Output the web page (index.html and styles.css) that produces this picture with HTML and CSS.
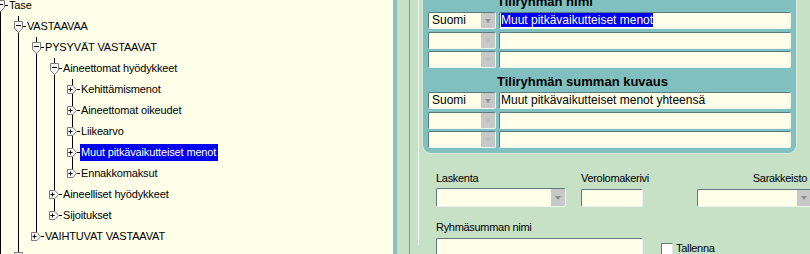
FILE: index.html
```html
<!DOCTYPE html>
<html lang="fi">
<head>
<meta charset="utf-8">
<title>Tiliryhmät</title>
<link rel="stylesheet" href="styles.css">
</head>
<body>
<svg class="defs" width="0" height="0" aria-hidden="true">
  <symbol id="i-minus" viewBox="0 0 9 12">
    <path d="M0.5 0.5H8.5V7.5L4.5 11.5L0.5 7.5Z" fill="#f4f4f4" stroke="#7b7b7b"/>
    <path d="M2 4.5H7" stroke="#000"/>
  </symbol>
  <symbol id="i-plus" viewBox="0 0 10 9">
    <path d="M0.5 0.5H6L9.5 4.5L6 8.5H0.5Z" fill="#f4f4f4" stroke="#7b7b7b"/>
    <path d="M1.5 4.5H5.5M3.5 2.5V6.5" stroke="#000"/>
  </symbol>
</svg>
<div class="app">
  <div class="tree-pane">
    <ul class="tree">
      <li class="more">
        <div class="node"><svg class="ico minus"><use href="#i-minus"/></svg><span class="dash"></span><span class="label">Tase</span></div>
        <ul>
          <li class="more">
            <div class="node"><svg class="ico minus"><use href="#i-minus"/></svg><span class="dash"></span><span class="label">VASTAAVAA</span></div>
            <ul>
              <li class="more">
                <div class="node"><svg class="ico minus"><use href="#i-minus"/></svg><span class="dash"></span><span class="label">PYSYVÄT VASTAAVAT</span></div>
                <ul>
                  <li class="more">
                    <div class="node"><svg class="ico minus"><use href="#i-minus"/></svg><span class="dash"></span><span class="label">Aineettomat hyödykkeet</span></div>
                    <ul>
                      <li class="more"><div class="node"><svg class="ico plus"><use href="#i-plus"/></svg><span class="dash"></span><span class="label">Kehittämismenot</span></div></li>
                      <li class="more"><div class="node"><svg class="ico plus"><use href="#i-plus"/></svg><span class="dash"></span><span class="label">Aineettomat oikeudet</span></div></li>
                      <li class="more"><div class="node"><svg class="ico plus"><use href="#i-plus"/></svg><span class="dash"></span><span class="label">Liikearvo</span></div></li>
                      <li class="more"><div class="node"><svg class="ico plus"><use href="#i-plus"/></svg><span class="dash"></span><span class="label sel">Muut pitkävaikutteiset menot</span></div></li>
                      <li class="last"><div class="node"><svg class="ico plus"><use href="#i-plus"/></svg><span class="dash"></span><span class="label">Ennakkomaksut</span></div></li>
                    </ul>
                  </li>
                  <li class="more"><div class="node"><svg class="ico plus"><use href="#i-plus"/></svg><span class="dash"></span><span class="label">Aineelliset hyödykkeet</span></div></li>
                  <li class="last"><div class="node"><svg class="ico plus"><use href="#i-plus"/></svg><span class="dash"></span><span class="label">Sijoitukset</span></div></li>
                </ul>
              </li>
              <li class="last"><div class="node"><svg class="ico plus"><use href="#i-plus"/></svg><span class="dash"></span><span class="label">VAIHTUVAT VASTAAVAT</span></div></li>
            </ul>
          </li>
          <li class="last"><div class="node"><svg class="ico minus"><use href="#i-minus"/></svg><span class="dash"></span></div></li>
        </ul>
      </li>
    </ul>
  </div>

  <div class="sash"></div>

  <div class="workspace">
    <div class="frame">
      <section class="panel">
        <h2 class="ph">Tiliryhmän nimi</h2>
        <div class="prow">
          <div class="combo"><span class="cv">Suomi</span><span class="cbtn"><i class="tri"></i></span></div>
          <div class="tf"><span class="hl">Muut pitkävaikutteiset menot</span></div>
        </div>
        <div class="prow">
          <div class="combo empty"><span class="cv"></span><span class="cbtn"><i class="tri"></i></span></div>
          <div class="tf"></div>
        </div>
        <div class="prow">
          <div class="combo empty"><span class="cv"></span><span class="cbtn"><i class="tri"></i></span></div>
          <div class="tf"></div>
        </div>
        <h2 class="ph">Tiliryhmän summan kuvaus</h2>
        <div class="prow">
          <div class="combo"><span class="cv">Suomi</span><span class="cbtn"><i class="tri"></i></span></div>
          <div class="tf">Muut pitkävaikutteiset menot yhteensä</div>
        </div>
        <div class="prow">
          <div class="combo empty"><span class="cv"></span><span class="cbtn"><i class="tri"></i></span></div>
          <div class="tf"></div>
        </div>
        <div class="prow">
          <div class="combo empty"><span class="cv"></span><span class="cbtn"><i class="tri"></i></span></div>
          <div class="tf"></div>
        </div>
      </section>

      <div class="fields">
        <div class="frow a">
          <div class="field lask">
            <span class="flabel">Laskenta</span>
            <div class="combo big"><span class="cv"></span><span class="cbtn"><i class="tri"></i></span></div>
          </div>
          <div class="field vero">
            <span class="flabel">Verolomakerivi</span>
            <div class="tf mid"></div>
          </div>
          <div class="field sara">
            <span class="flabel right">Sarakkeisto</span>
            <div class="combo mid"><span class="cv"></span><span class="cbtn"><i class="tri"></i></span></div>
          </div>
        </div>
        <div class="frow b">
          <div class="field ryhma">
            <span class="flabel">Ryhmäsumman nimi</span>
            <div class="tf big"></div>
          </div>
          <label class="check"><span class="box"></span><span class="clabel">Tallenna</span></label>
        </div>
      </div>
    </div>
  </div>
</div>
</body>
</html>
```

FILE: styles.css
```css
html, body {
  margin: 0;
  padding: 0;
  width: 810px;
  height: 254px;
  overflow: hidden;
  font-family: "Liberation Sans", Arial, sans-serif;
  color: #000;
}

.defs {
  position: absolute;
  width: 0;
  height: 0;
}

.app {
  display: flex;
  height: 254px;
  overflow: hidden;
}

/* ---------- tree ---------- */
.tree-pane {
  flex: none;
  width: 393px;
  height: 254px;
  background: #fffee9;
  overflow: hidden;
}

.tree,
.tree ul {
  list-style: none;
  margin: 0;
  padding: 0;
}

.tree {
  margin-top: -5px;
}

.tree ul {
  padding-left: 18px;
}

.tree li {
  background: linear-gradient(#000, #000) no-repeat 0 0 / 1px 100%;
}

.tree li.last {
  background-size: 1px 11px;
}

.node {
  display: flex;
  align-items: center;
  height: 21px;
  white-space: nowrap;
  font-size: 11px;
  letter-spacing: -0.15px;
}

.ico {
  flex: none;
  display: block;
}

.ico.minus {
  width: 9px;
  height: 12px;
  margin-left: -4px;
}

.ico.plus {
  width: 10px;
  height: 9px;
  margin-left: -5px;
}

.dash {
  flex: none;
  width: 3px;
  height: 1px;
  background: #000;
}

.label {
  padding: 1px 2px 1px 1px;
  line-height: 15px;
}

.label.sel {
  background: #0000f0;
  color: #fff;
}

/* ---------- sash / frame ---------- */
.sash {
  flex: none;
  width: 12px;
  background: #c6e1c6;
  border-left: 4px solid #88c2c2;
  border-right: 1px solid #729c9c;
}

.workspace {
  flex: 1;
  min-width: 0;
  background: #c6e1c6;
  padding-left: 8px;
  overflow: hidden;
}

.frame {
  height: 100%;
  border-left: 1px solid #eef6ee;
  padding-left: 4px;
}

/* ---------- teal panel ---------- */
.panel {
  width: 373px;
  box-sizing: border-box;
  margin-top: -9.5px;
  padding: 0 5px 5px 5px;
  background: #80c0c0;
  border-radius: 0 0 8px 8px;
  box-shadow: 0 0 0 1px #dcecdc;
  display: flex;
  flex-direction: column;
  gap: 2.5px;
}

.ph {
  margin: 0;
  padding: 3px 0 0 69px;
  font-size: 13px;
  font-weight: bold;
  line-height: 16px;
}

.prow {
  display: flex;
  gap: 3px;
  height: 17px;
}

.combo,
.tf {
  box-sizing: border-box;
  background: #fffee9;
  border: 1px solid;
  border-color: #5c7c7c #eef4ee #eef4ee #5c7c7c;
  border-radius: 2px;
  font-size: 12px;
  line-height: 15px;
  white-space: nowrap;
  overflow: hidden;
}

.combo {
  flex: none;
  width: 68px;
  display: flex;
}

.cv {
  flex: 1;
  padding-left: 3px;
}

.cbtn {
  flex: none;
  width: 14px;
  background: #c8c8c8;
  display: flex;
  align-items: center;
  justify-content: center;
}

.tri {
  display: block;
  width: 0;
  height: 0;
  border-left: 3.5px solid transparent;
  border-right: 3.5px solid transparent;
  border-top: 4px solid #8c8c8c;
}

.combo.empty .tri {
  border-top-color: #bebebe;
}

.tf {
  flex: 1;
  padding-left: 1px;
}

.hl {
  background: #0000f0;
  color: #fff;
}

/* ---------- lower fields ---------- */
.fields {
  padding-left: 13px;
}

.frow {
  display: flex;
}

.frow.a {
  margin-top: 19px;
  align-items: flex-end;
}

.frow.b {
  margin-top: 14px;
  align-items: flex-start;
}

.field {
  flex: none;
  display: flex;
  flex-direction: column;
}

.field .tf,
.field .combo {
  flex: none;
}

.flabel {
  font-size: 11px;
  line-height: 13px;
  letter-spacing: -0.3px;
  margin-bottom: 4px;
  white-space: nowrap;
}

.flabel.right {
  text-align: right;
  padding-right: 5px;
}

.field.lask {
  width: 130px;
  margin-right: 15px;
}

.field.lask .flabel {
  margin-bottom: 3px;
}

.field.vero {
  width: 62px;
  margin-right: 54px;
}

.field.sara {
  width: 115px;
}

.field.ryhma {
  width: 207px;
  margin-right: 18px;
}

.combo.big,
.tf.big {
  width: 100%;
  height: 19px;
}

.combo.mid,
.tf.mid {
  width: 100%;
  height: 18px;
}

.check {
  display: flex;
  align-items: center;
  gap: 3px;
  margin-top: 21px;
}

.box {
  display: block;
  width: 12px;
  height: 12px;
  box-sizing: border-box;
  background: #fff;
  border: 1px solid;
  border-color: #5c7c7c #dfe8df #dfe8df #5c7c7c;
}

.clabel {
  font-size: 11px;
  line-height: 13px;
  letter-spacing: -0.3px;
}
```
